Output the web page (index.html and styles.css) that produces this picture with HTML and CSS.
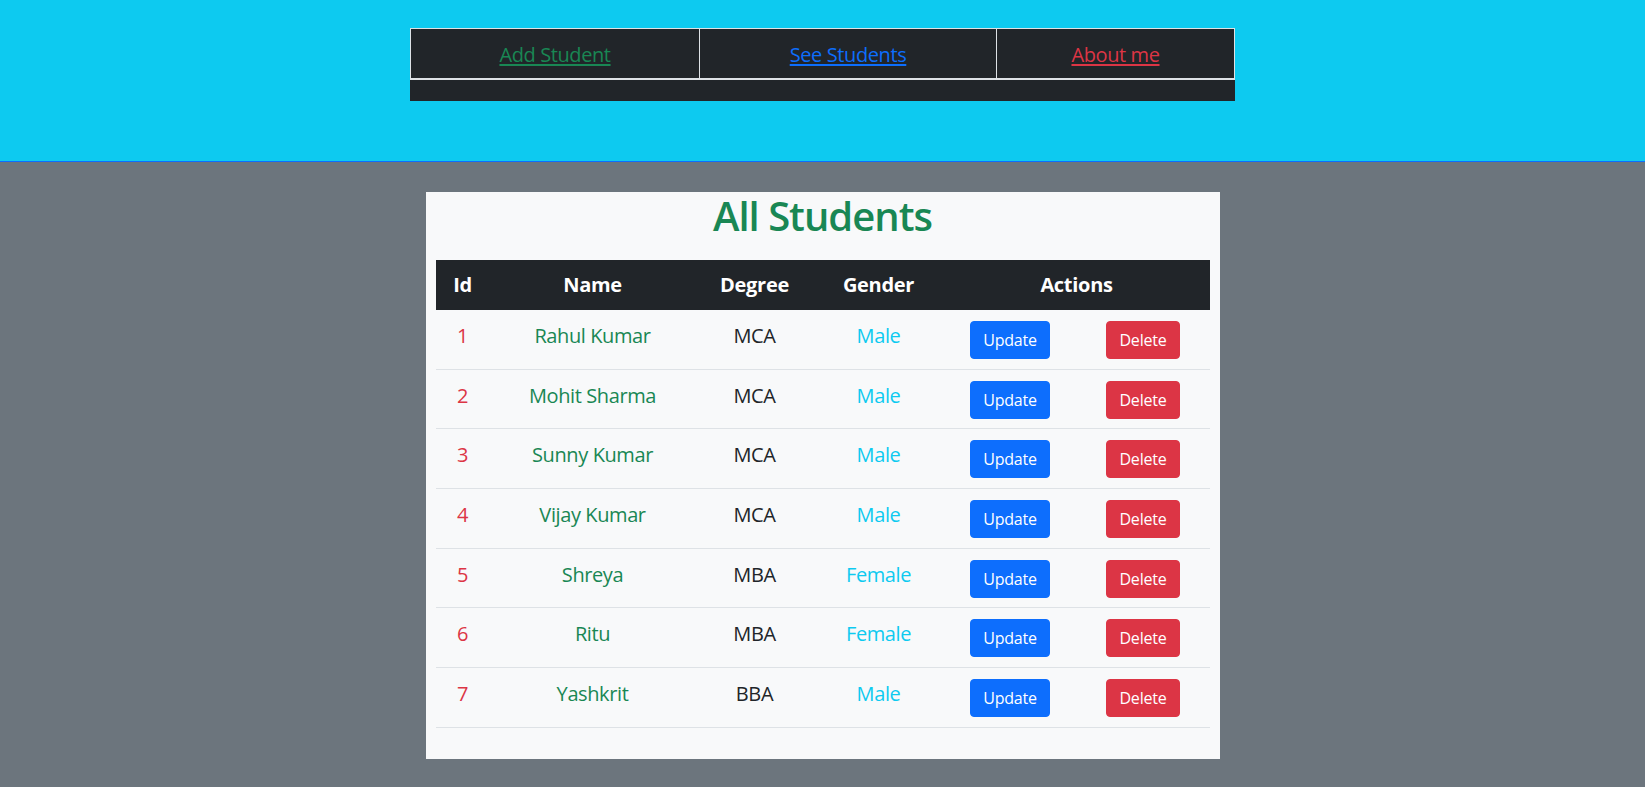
FILE: index.html
```html
<!DOCTYPE html>
<html lang="en">
<head>
<meta charset="utf-8">
<title>All Students</title>
<link rel="stylesheet" href="styles.css">
</head>
<body>
  <header class="top">
    <nav class="nav">
      <div class="nav-row">
        <div class="nav-cell"><a class="link-success" href="#">Add Student</a></div>
        <div class="nav-cell"><a class="link-primary" href="#">See Students</a></div>
        <div class="nav-cell"><a class="link-danger" href="#">About me</a></div>
      </div>
      <div class="nav-empty"></div>
    </nav>
  </header>

  <main class="card">
    <h1 class="title">All Students</h1>
    <table class="students">
      <colgroup>
        <col class="c-id"><col class="c-name"><col class="c-degree"><col class="c-gender"><col class="c-act"><col class="c-act">
      </colgroup>
      <thead>
        <tr><th>Id</th><th>Name</th><th>Degree</th><th>Gender</th><th colspan="2">Actions</th></tr>
      </thead>
      <tbody>
        <tr><td class="id">1</td><td class="name">Rahul Kumar</td><td>MCA</td><td class="gender">Male</td><td><button class="btn btn-primary">Update</button></td><td><button class="btn btn-danger">Delete</button></td></tr>
        <tr><td class="id">2</td><td class="name">Mohit Sharma</td><td>MCA</td><td class="gender">Male</td><td><button class="btn btn-primary">Update</button></td><td><button class="btn btn-danger">Delete</button></td></tr>
        <tr><td class="id">3</td><td class="name">Sunny Kumar</td><td>MCA</td><td class="gender">Male</td><td><button class="btn btn-primary">Update</button></td><td><button class="btn btn-danger">Delete</button></td></tr>
        <tr><td class="id">4</td><td class="name">Vijay Kumar</td><td>MCA</td><td class="gender">Male</td><td><button class="btn btn-primary">Update</button></td><td><button class="btn btn-danger">Delete</button></td></tr>
        <tr><td class="id">5</td><td class="name">Shreya</td><td>MBA</td><td class="gender">Female</td><td><button class="btn btn-primary">Update</button></td><td><button class="btn btn-danger">Delete</button></td></tr>
        <tr><td class="id">6</td><td class="name">Ritu</td><td>MBA</td><td class="gender">Female</td><td><button class="btn btn-primary">Update</button></td><td><button class="btn btn-danger">Delete</button></td></tr>
        <tr><td class="id">7</td><td class="name">Yashkrit</td><td>BBA</td><td class="gender">Male</td><td><button class="btn btn-primary">Update</button></td><td><button class="btn btn-danger">Delete</button></td></tr>
      </tbody>
    </table>
  </main>
</body>
</html>
```

FILE: styles.css
```css
* { box-sizing: border-box; }

html, body {
  margin: 0;
  padding: 0;
}

body {
  background: #6c757d;
  font-family: "Open Sans", "Noto Sans", "Liberation Sans", sans-serif;
  color: #212529;
  min-height: 787px;
}

.top {
  background: #0dcaf0;
  height: 162px;
  border-bottom: 1px solid #0d6efd;
  padding-top: 28px;
}

.nav {
  width: 825px;
  margin: 0 auto;
  background: #212529;
}

.nav-row {
  display: grid;
  grid-template-columns: 288px 297px 1fr;
  border: 1px solid #dee2e6;
  border-bottom-width: 2px;
}

.nav-cell {
  text-align: center;
  font-size: 20px;
  line-height: 30px;
  padding: 11px 0 8px;
  letter-spacing: -0.4px;
}

.nav-cell + .nav-cell {
  border-left: 1px solid #dee2e6;
}

.nav-cell a {
  text-decoration: underline;
  text-underline-offset: 2px;
}

.link-success { color: #198754; }
.link-primary { color: #0d6efd; }
.link-danger { color: #dc3545; }

.nav-empty {
  height: 21px;
}

.card {
  display: block;
  width: 794px;
  margin: 30px auto 0;
  background: #f8f9fa;
  padding: 0 10px 31px;
}

.title {
  margin: 0 0 20px;
  text-align: center;
  color: #198754;
  font-size: 40px;
  line-height: 48px;
  font-weight: 600;
  letter-spacing: -1px;
}

.students {
  width: 774px;
  table-layout: fixed;
  border-collapse: collapse;
  font-size: 20px;
  line-height: 30px;
}

.c-id { width: 54px; }
.c-name { width: 206px; }
.c-degree { width: 118px; }
.c-gender { width: 130px; }
.c-act { width: 133px; }

.students th {
  background: #212529;
  color: #fff;
  font-weight: 700;
  height: 50px;
  padding: 10px 8px;
  text-align: center;
  letter-spacing: -0.3px;
}

.students td {
  text-align: center;
  vertical-align: top;
  padding: 10.9px 8px 9.8px;
  border-bottom: 1px solid #dee2e6;
  letter-spacing: -0.4px;
  white-space: nowrap;
}

.students .id { color: #dc3545; }
.students .name { color: #198754; }
.students .gender { color: #0dcaf0; }

.btn {
  display: inline-block;
  font-family: inherit;
  font-size: 16px;
  line-height: 24px;
  padding: 6px 12px;
  height: 38px;
  border: 1px solid transparent;
  border-radius: 4px;
  color: #fff;
  cursor: pointer;
  letter-spacing: -0.2px;
}

.btn-primary {
  background: #0d6efd;
  border-color: #0d6efd;
}

.btn-danger {
  background: #dc3545;
  border-color: #dc3545;
}
```
